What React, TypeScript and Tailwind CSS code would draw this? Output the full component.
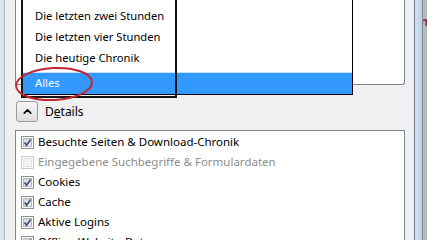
import { ChevronUp } from "lucide-react";

const ranges = ["Die letzten zwei Stunden", "Die letzten vier Stunden", "Die heutige Chronik"];

const items = [
  { label: "Besuchte Seiten & Download-Chronik", checked: true, disabled: false },
  { label: "Eingegebene Suchbegriffe & Formulardaten", checked: false, disabled: true },
  { label: "Cookies", checked: true, disabled: false },
  { label: "Cache", checked: true, disabled: false },
  { label: "Aktive Logins", checked: true, disabled: false },
  { label: "Offline-Website-Daten", checked: true, disabled: false },
];

function Check({ checked, disabled }: { checked: boolean; disabled: boolean }) {
  return (
    <svg width="13" height="13" viewBox="0 0 13 13" className="shrink-0">
      <defs>
        <linearGradient id="cbfill" x1="0" y1="0" x2="1" y2="1">
          <stop offset="0" stopColor="#cfd3d8" />
          <stop offset="1" stopColor="#f6f7f9" />
        </linearGradient>
      </defs>
      <rect x="0.5" y="0.5" width="12" height="12" fill="#fff" stroke={disabled ? "#c9c9c9" : "#8e8f8f"} />
      <rect x="2.5" y="2.5" width="8" height="8" fill={disabled ? "#f4f4f4" : "url(#cbfill)"} stroke={disabled ? "#e1e1e1" : "#b4b8be"} />
      {checked && (
        <path d="M3.6 6.4 L5.6 9.2 L9.6 3.4" fill="none" stroke="#40527d" strokeWidth="1.7" />
      )}
    </svg>
  );
}

export default function App() {
  return (
    <div
      className="relative w-[427px] h-[240px] overflow-hidden bg-[#f0f0f0] flex text-[11.5px] text-black"
      style={{ fontFamily: '"Noto Sans", "Open Sans", sans-serif' }}
    >
      {/* left window frame */}
      <div className="w-[5px] shrink-0 bg-[#d9e4ee] border-r border-[#a7b4c1]" />

      {/* dialog body */}
      <div className="w-[409px] shrink-0 pl-[10px] flex flex-col">
        <div className="w-[390px] h-[85px] shrink-0 bg-white border-x border-b border-[#828790] rounded-br-[3px]" />

        <div className="mt-[16px] h-[21px] shrink-0 flex items-center">
          <div className="ml-[1px] w-[22px] h-[21px] shrink-0 rounded-[3px] border border-[#9a9a9a] bg-gradient-to-b from-[#f6f6f6] to-[#dedede] flex items-center justify-center">
            <ChevronUp size={13} strokeWidth={3.2} className="text-black" />
          </div>
          <span className="ml-[7px] text-[12px]">
            D<span className="underline">e</span>tails
          </span>
        </div>

        <div className="mt-[8px] w-[390px] shrink-0 bg-white border-x border-t border-[#828790] pt-px flex flex-col">
          {items.map((it) => (
            <div key={it.label} className="h-[20px] shrink-0 flex items-center pl-[5px] gap-[4px]">
              <Check checked={it.checked} disabled={it.disabled} />
              <span className={it.disabled ? "text-[#8d8d8d] whitespace-nowrap" : "whitespace-nowrap"}>{it.label}</span>
            </div>
          ))}
        </div>
      </div>

      {/* right window frame */}
      <div className="flex-1 flex">
        <div className="w-px bg-[#6c7a89]" />
        <div className="w-[7px] bg-gradient-to-r from-[#d5e3f0] to-[#b9d0e6]" />
        <div className="w-px bg-[#7c8b9a]" />
        <div className="flex-1 bg-[#b9b9b9] overflow-hidden">
          <span className="block mt-[12px] -ml-[3px] text-[13px] font-bold text-[#8c1f33]">n</span>
        </div>
      </div>

      {/* open dropdown list */}
      <div className="absolute left-[22px] top-0 w-[331px] h-[95px] bg-white border-x border-b border-black pt-[6px] flex flex-col text-[11.2px]">
        {ranges.map((r) => (
          <div key={r} className="h-[21px] shrink-0 flex items-center pl-[12px] whitespace-nowrap">
            {r}
          </div>
        ))}
        <div className="mt-[3px] h-px bg-[#c8e4ff]" />
        <div className="h-[21px] shrink-0 flex items-center pl-[12px] bg-[#3399ff] text-white">Alles</div>
      </div>

      {/* annotation frame */}
      <div className="absolute left-[21px] top-[-2px] w-[156px] h-[100px] border-2 border-[#141414]" />

      {/* red ellipse annotation */}
      <svg className="absolute left-[12px] top-[64px]" width="84" height="40" viewBox="0 0 84 40">
        <ellipse cx="42" cy="20" rx="38" ry="16" fill="none" stroke="#c3262e" strokeWidth="2" transform="rotate(-3 42 20)" />
      </svg>
    </div>
  );
}
